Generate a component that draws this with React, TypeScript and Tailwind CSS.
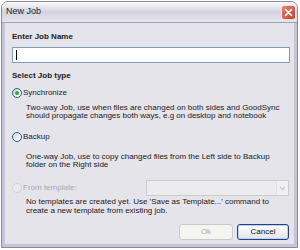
import React from "react";

const Radio = ({ checked, disabled }: { checked?: boolean; disabled?: boolean }) => (
  <span
    className={`inline-flex items-center justify-center w-[10px] h-[10px] rounded-full border ${
      disabled ? "border-[#d2d2d8] bg-[#ebebee]" : "border-[#2a5d8f] bg-gradient-to-br from-[#d8d8d2] to-white"
    }`}
  >
    {checked && <span className="w-[4px] h-[4px] rounded-full bg-[#28a828]" />}
  </span>
);

export default function App() {
  return (
    <div className="w-[300px] h-[250px] bg-white" style={{ fontFamily: "'Liberation Sans', Arial, sans-serif" }}>
      <div className="ml-[1px] pt-[1px] w-[297px] h-[248px]">
        <div className="flex flex-col h-full rounded-t-[7px] border border-[#8987a5] bg-[#e5e4ea] overflow-hidden">
          {/* title bar */}
          <div className="flex items-center justify-between h-[21px] pl-[4px] pr-[1px] bg-gradient-to-b from-[#fbfbfd] via-[#d3d3df] to-[#e6e6ee] border-b border-[#a09fb8]">
            <span className="text-[9px] text-[#1e1e2c]">New Job</span>
            <span className="flex items-center justify-center w-[15px] h-[15px] rounded-[3px] border border-[#f4e2dc] bg-gradient-to-br from-[#e5816f] to-[#c0432c]">
              <svg width="9" height="9" viewBox="0 0 9 9">
                <path d="M1.5 1.5 L7.5 7.5 M7.5 1.5 L1.5 7.5" stroke="white" strokeWidth="1.6" strokeLinecap="round" />
              </svg>
            </span>
          </div>
          {/* body */}
          <div className="flex-1 flex flex-col border-x-[3px] border-b-[3px] border-[#c6c5d8] pl-[7px] pr-[5px] text-[8px] text-[#1a1a1a]">
            <div className="mt-[9px] h-[10px] leading-[10px] font-bold">Enter Job Name</div>
            <div className="mt-[5px] h-[16px] w-[278px] border border-[#7f9db9] bg-white flex items-center pl-[3px]">
              <span className="w-px h-[10px] bg-black" />
            </div>
            <div className="mt-[8px] h-[10px] leading-[10px] font-bold">Select Job type</div>
            <div className="mt-[6px] h-[12px] flex items-center gap-[1px]">
              <Radio checked />
              <span>Synchronize</span>
            </div>
            <div className="mt-[5px] ml-[14px] leading-[8px] whitespace-nowrap">
              Two-way Job, use when files are changed on both sides and GoodSync
              <br />
              should propagate changes both ways, e.g on desktop and notebook
            </div>
            <div className="mt-[11px] h-[12px] flex items-center gap-[1px]">
              <Radio />
              <span>Backup</span>
            </div>
            <div className="mt-[10px] ml-[14px] leading-[8px] whitespace-nowrap">
              One-way Job, use to copy changed files from the Left side to Backup
              <br />
              folder on the Right side
            </div>
            <div className="mt-[11px] h-[16px] flex items-center justify-between">
              <div className="flex items-center gap-[1px]">
                <Radio disabled />
                <span className="text-[#aaaaae]">From template:</span>
              </div>
              <div className="w-[143px] h-[16px] border border-[#cbcbd1] bg-[#ececef] flex justify-end">
                <span className="w-[12px] h-full flex items-center justify-center bg-[#f1f1f3] border-l border-[#e2e2e6]">
                  <svg width="7" height="5" viewBox="0 0 7 5">
                    <path d="M1 1 L3.5 3.5 L6 1" stroke="#c6c6cc" strokeWidth="1.2" fill="none" />
                  </svg>
                </span>
              </div>
            </div>
            <div className="mt-[2px] ml-[14px] leading-[8.5px] whitespace-nowrap">
              No templates are created yet. Use 'Save as Template...' command to
              <br />
              create a new template from existing job.
            </div>
            <div className="mt-[9px] flex justify-end gap-[4px]">
              <button className="w-[54px] h-[16px] rounded-[3px] border border-[#cac9cd] bg-[#f4f4f0] text-[#acabaf] text-[8px]">Ok</button>
              <button className="w-[52px] h-[16px] rounded-[3px] border border-[#243f7c] bg-gradient-to-b from-white to-[#e4e3e8] text-[#111] text-[8px] shadow-[inset_0_0_0_1px_#bcd2f2]">Cancel</button>
            </div>
          </div>
        </div>
      </div>
    </div>
  );
}
